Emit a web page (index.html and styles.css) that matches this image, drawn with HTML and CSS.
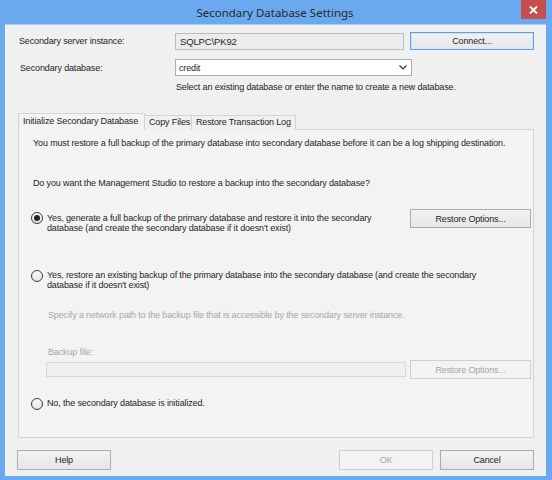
FILE: index.html
```html
<!DOCTYPE html>
<html lang="en">
<head>
    <meta charset="UTF-8">
    <meta name="viewport" content="width=device-width, initial-scale=1.0">
    <title>Secondary Database Settings</title>
    <link rel="stylesheet" href="styles.css">
</head>
<body>
    <div class="dialog">
        <div class="dialog__titlebar">
            <div class="dialog__title">Secondary Database Settings</div>
            <div class="dialog__close">
                <svg width="9" height="8" viewBox="0 0 9 8"><path d="M1 0.5 L8 7.5 M8 0.5 L1 7.5" stroke="#fff" stroke-width="1.8"/></svg>
            </div>
        </div>
        <div class="dialog__client">
            <div class="field-row">
                <div class="field-row__label">Secondary server instance:</div>
                <div class="textbox textbox_readonly">SQLPC\PK92</div>
                <div class="btn btn_default btn_connect">Connect...</div>
            </div>
            <div class="field-row field-row_db">
                <div class="field-row__label field-row__label_db">Secondary database:</div>
                <div class="combo">
                    <span>credit</span>
                    <svg width="8" height="5" viewBox="0 0 8 5"><path d="M0.5 0.5 L4 4 L7.5 0.5" fill="none" stroke="#333" stroke-width="1.2"/></svg>
                </div>
            </div>
            <div class="hint">Select an existing database or enter the name to create a new database.</div>

            <div class="tabs">
                <div class="tabs__head">
                    <div class="tabs__item tabs__item_active">Initialize Secondary Database</div>
                    <div class="tabs__item tabs__item_copy">Copy Files</div>
                    <div class="tabs__item tabs__item_log">Restore Transaction Log</div>
                </div>
                <div class="tabs__panel">
                    <div class="panel__text">You must restore a full backup of the primary database into secondary database before it can be a log shipping destination.</div>
                    <div class="panel__text panel__text_question">Do you want the Management Studio to restore a backup into the secondary database?</div>

                    <div class="option option_first">
                        <div class="radio radio_checked"></div>
                        <div class="option__text option__text_short">Yes, generate a full backup of the primary database and restore it into the secondary database (and create the secondary database if it doesn't exist)</div>
                        <div class="btn btn_options">Restore Options...</div>
                    </div>

                    <div class="option option_second">
                        <div class="radio"></div>
                        <div class="option__text">Yes, restore an existing backup of the primary database into the secondary database (and create the secondary database if it doesn't exist)</div>
                    </div>

                    <div class="sub sub_path">Specify a network path to the backup file that is accessible by the secondary server instance.</div>
                    <div class="sub sub_file">Backup file:</div>
                    <div class="file-row">
                        <div class="textbox textbox_disabled"></div>
                        <div class="btn btn_options btn_disabled">Restore Options...</div>
                    </div>

                    <div class="option option_third">
                        <div class="radio"></div>
                        <div class="option__text">No, the secondary database is initialized.</div>
                    </div>
                </div>
            </div>

            <div class="footer">
                <div class="btn btn_footer">Help</div>
                <div class="footer__spacer"></div>
                <div class="btn btn_footer btn_disabled">OK</div>
                <div class="btn btn_footer">Cancel</div>
            </div>
        </div>
    </div>
</body>
</html>
```

FILE: styles.css
```css
*{box-sizing:border-box}
body{margin:0;font-family:"Liberation Sans",Arial,sans-serif;font-size:9px;letter-spacing:-0.14px;color:#1e1e1e}

.dialog{width:552px;height:480px;background:#6ba9ee;padding:0 6px 4px 5px;display:flex;flex-direction:column}
.dialog__titlebar{position:relative;height:24px;flex-shrink:0;display:flex;align-items:center;justify-content:center}
.dialog__title{font-family:"Noto Sans","Open Sans",sans-serif;font-size:11.5px;letter-spacing:0;color:#262a30;margin-top:1px;margin-left:-1px}
.dialog__close{position:absolute;top:0;right:0;width:25px;height:19px;background:#c74e4f;display:flex;align-items:center;justify-content:center}
.dialog__client{flex:1;background:#f0f0f0;padding:7px 0 0 13px;border-top:1px solid #a9cdf5}

.field-row{display:flex;align-items:center;height:18px}
.field-row__label{width:157px;padding-left:1px}
.field-row__label_db{padding-left:2px}
.field-row_db{margin-top:9px;height:17px}

.textbox{height:17px;border:1px solid #c5c5c5;padding:0 4px;line-height:15px;font-size:9.5px}
.textbox_readonly{width:229px;background:#ececec;border-color:#bcbcbc}
.textbox_disabled{width:360px;height:15px;background:#f0f0f0;border-color:#d9d9d9}

.combo{width:237px;height:17px;background:#fff;border:1px solid #abadb3;display:flex;align-items:center;justify-content:space-between;padding:0 4px 0 3px}

.hint{margin:5px 0 0 158px;line-height:12px}

.btn{display:flex;align-items:center;justify-content:center;border:1px solid #acacac;background:linear-gradient(#f2f2f2,#e6e6e6);color:#1e1e1e;font-size:9px;white-space:nowrap}
.btn_default{border-color:#5aa3ea;box-shadow:inset 0 0 0 1px #cfe4f9}
.btn_connect{width:124px;height:18px;margin-left:6px}
.btn_options{width:121px;height:19px;flex-shrink:0}
.btn_disabled{color:#a6a6a6;border-color:#cfcfcf;background:#f3f3f3}
.btn_footer{width:94px;height:20px}

.tabs{margin-top:20px;width:516px}
.tabs__head{display:flex;align-items:flex-end;height:17px;position:relative;z-index:1}
.tabs__item{height:15px;line-height:13px;border:1px solid #d3d3d3;border-bottom:none;background:#f0f0f0;padding:0 4px;margin-left:-1px;white-space:nowrap;overflow:hidden}
.tabs__item_active{height:17px;line-height:14px;width:127px;margin-left:0;background:#f3f3f3;border-color:#d3d3d3}
.tabs__item_copy{width:48px}
.tabs__item_log{width:105px}
.tabs__panel{margin-top:-1px;height:309px;border:1px solid #d3d3d3;background:#f3f3f3;padding:8px 0 0 12px}

.panel__text{margin-left:2px;line-height:10px}
.panel__text_question{margin-top:30px}

.option{display:flex;align-items:flex-start}
.option__text{line-height:10px;margin-top:4px;margin-left:4px;width:450px}
.option__text_short{width:342px}
.option_first{margin-top:21px}
.option_first .btn_options{margin-left:auto;margin-right:2px}
.option_second{margin-top:37px}
.option_second .radio,.option_third .radio{margin-top:0}
.option_second .option__text,.option_third .option__text{margin-top:0}
.option_third{margin-top:19px}

.radio{width:12px;height:12px;margin-top:3px;border-radius:50%;border:1px solid #3a3a3a;background:linear-gradient(#fafafa,#e6e6e6);flex-shrink:0;position:relative}
.radio_checked:after{content:'';position:absolute;top:2px;left:2px;width:6px;height:6px;border-radius:50%;background:#252525}

.sub{margin-left:17px;line-height:10px;color:#a7a7a7}
.sub_path{margin-top:20px}
.sub_file{margin-top:27px}

.file-row{display:flex;align-items:center;margin-top:3px;margin-left:15px;height:19px}
.file-row .btn_options{margin-left:4px}

.footer{display:flex;margin-top:12px;width:517px;margin-left:-1px}
.footer__spacer{flex:1}
.footer .btn + .btn{margin-left:7px}
```
